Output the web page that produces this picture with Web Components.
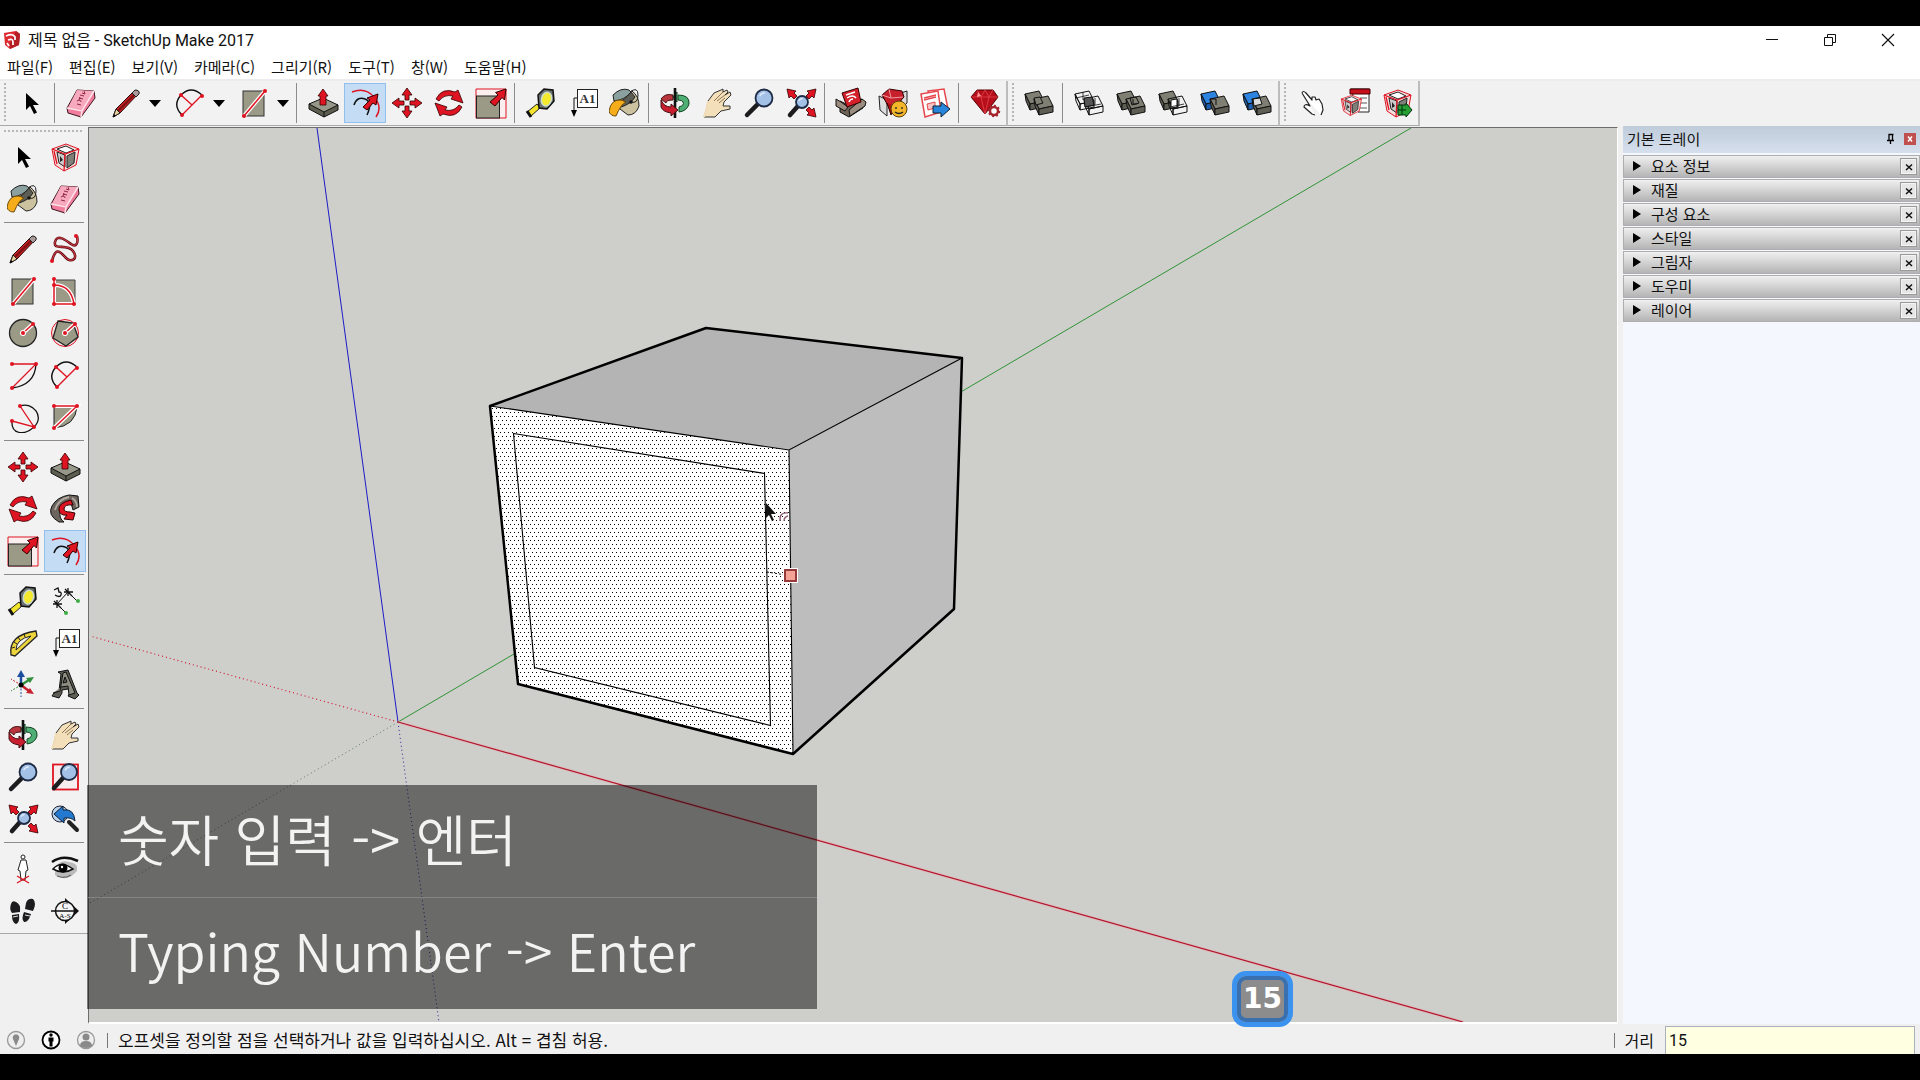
<!DOCTYPE html>
<html lang="ko">
<head>
<meta charset="utf-8">
<title>제목 없음 - SketchUp Make 2017</title>
<style>
html,body{height:100%}
body{margin:0;background:#000;font-family:"Noto Sans CJK KR","Noto Sans",sans-serif;color:#111;overflow:hidden}
</style>
</head>
<body>
<sk-app></sk-app>
<script>
const RED='#df1422', GRAY='#9a9a86';
const arrowNE=(x,y)=>`<path transform="translate(${x} ${y})" d="M0 10L8 3 5.500 0.500 16-3 14.500 8 12 5.500 5 14z" fill="${RED}" stroke="#300" stroke-width="1"/>`;
const lens=(cx,cy,r,hx,hy)=>`<path d="M${cx-r*.7} ${cy+r*.7}L${hx} ${hy}" stroke="#1c1c1e" stroke-width="4.500" stroke-linecap="round"/><circle cx="${cx}" cy="${cy}" r="${r}" fill="#a3c0e6" stroke="#1d2b45" stroke-width="1.800"/><path d="M${cx-r*.5} ${cy-r*.2}a${r*.6} ${r*.6} 0 0 1 ${r*.6}-${r*.4}" stroke="#dceafa" fill="none" stroke-width="1.500"/>`;
const dot=(...p)=>p.map(([x,y])=>`<circle cx="${x}" cy="${y}" r="2" fill="${RED}"/>`).join('');
const slab=(x,y,f,s='#111')=>`<g transform="translate(${x} ${y})" stroke="${s}" stroke-width="1" stroke-linejoin="round"><path d="M0 3L14 0 19 10 5 13z" fill="${f[0]}"/><path d="M0 3L5 13v6L1 10z" fill="${f[1]}"/><path d="M5 13L19 10v6L5 19z" fill="${f[1]}"/></g>`;
const G=['#807f73','#5f5e54'], B=['#2c84e0','#1c5eb0'], N=['none','none'];
const boxRed=`<path d="M3 8L17 3 30 8 27 24 15 30 6 24z" fill="#f4dede" stroke="${RED}"/><path d="M8 11l8 3v12l-6-4z" fill="#ccc" stroke="#222"/><path d="M18 15l8-4-1 11-7 5z" fill="#808078" stroke="#222"/><path d="M8 8l9-3 8 4-8 3z" fill="#fff" stroke="#222"/><path d="M11 15l3 4-3 2z" fill="#222"/><path d="M3 8l13 5 14-5M16 13l-1 17M5 10l3 13" stroke="${RED}" stroke-width="1.300" fill="none"/>`;
const ICONS={
select:`<path d="M11 6v17l4-4 4 8 3-1.500-4-7.500h6z" fill="#000"/>`,
eraser:`<path d="M12 3L29 4 30 11 16 30 3 26 2 21z" fill="#f07d9c" stroke="#3a1520" stroke-linejoin="round"/><path d="M12 3L29 4 17 23 3 21z" fill="#f7a9bd"/><path d="M2 21l15 3 12-20M17 24l-1 6" fill="none" stroke="#fde4ea" stroke-width="1.500"/><path d="M12 17l4 1M12 14q4-2 4 1M14 11l4 1M14 13l1-3M15 8l4 1M17 6l3 1-1-3" stroke="#8e2746" fill="none"/>`,
pencil:`<path d="M3 30l3-8L24 4q4-2 5 2L10 26z" fill="#c01f23" stroke="#2a0a0a"/><path d="M8 24L26 6" stroke="#7b1113" stroke-width="2"/><path d="M3 30l3-8 4 4z" fill="#e8cf9e" stroke="#222"/><path d="M3 30l1-3 2 2z"/><path d="M22 6l4 4 3-3q1-4-4-4z" fill="#a99" stroke="#222"/>`,
arc2:`<path d="M7 8Q17-2 28 8M7 8Q-2 18 8 28" fill="none" stroke="#111" stroke-width="1.400"/><path d="M8 28L28 8M7 8L18 18" stroke="${RED}" stroke-width="1.400"/>${dot([7,8],[28,9],[8,28])}`,
rect:`<rect x="5" y="4" width="21" height="25" fill="${GRAY}" stroke="#333"/><path d="M6 29L27 4" stroke="#fff" stroke-width="4"/><path d="M6 29L27 4" stroke="${RED}" stroke-width="1.500"/>${dot([6,29],[27,4])}`,
push:`<path d="M2 17v5l15 8 14-7v-5z" fill="#5d5d50" stroke="#111"/><path d="M2 17L16 11 31 18 17 25z" fill="#98988a" stroke="#111"/><path d="M17 25v5" stroke="#111"/><path d="M16 2L21 9H19V18H13V9H11z" fill="${RED}" stroke="#300" stroke-width=".8"/>`,
offset:`<path d="M3 5Q16 0 25 10T27 30" fill="none" stroke="${RED}" stroke-width="1.500"/><path d="M5 18Q8 9 16 12T18 28" fill="none" stroke="#111" stroke-width="1.500"/><path d="M14 20L21 13 18 11 29 7 27 18 24 16 18 23z" fill="${RED}" stroke="#300"/>`,
move:[0,90,180,270].map(a=>`<path transform="rotate(${a} 16 16)" d="M16 1L21 8H18V13H14V8H11z" fill="${RED}" stroke="#300" stroke-width=".8"/>`).join(''),
rotate:[0,180].map(a=>`<path transform="rotate(${a} 16 16)" d="M3 12Q9 0 22 5L25 3 30 16 18 12 20 9Q11 7 6 14z" fill="${RED}" stroke="#300" stroke-width=".8"/>`).join(''),
scale:`<path d="M1 2H31V31H1z" fill="#fbeeee" stroke="${RED}"/><rect x="1.500" y="9" width="23" height="22" fill="${GRAY}" stroke="#222"/>${arrowNE(15,5)}`,
tape:`<path d="M2 25l10-8 3 4-9 8z" fill="#f1e42a" stroke="#222"/><path d="M2 24l4 6" stroke="#111" stroke-width="3"/><path d="M13 8L19 2 28 3 29 14 22 22 14 21z" fill="#6b7172" stroke="#111" stroke-width="1.500"/><ellipse cx="21.500" cy="12" rx="5" ry="7" transform="rotate(15 21 12)" fill="#f4e92c" stroke="#cdc" stroke-width="1.500"/>`,
text:`<path d="M12 11H7V25" fill="none" stroke="#111"/><path d="M4 23h6l-3 7z"/><rect x="10.500" y="2.500" width="20" height="18" fill="#fff" stroke="#222"/><text x="20.500" y="16" font-family="Liberation Serif,serif" font-size="13" font-weight="700" text-anchor="middle" fill="#333">A1</text>`,
paint:`<path d="M5 10L23 4Q30 9 30 19 27 28 19 28L11 22 8 14z" fill="#cdc29f" stroke="#222"/><path d="M4 8Q12 0 20 3L22 5Q16 13 5 14z" fill="#8ba19f" stroke="#222"/><path d="M22 5Q15 14 9 15L12 20Q22 17 26 10z" fill="#5c5e56" stroke="#222"/><circle cx="22" cy="15" r="1.800" fill="#111"/><path d="M0 24Q2 12 12 13L17 15Q12 17 7 29 1 29 0 24z" fill="#f6ad1c" stroke="#6b4a08"/><path d="M21 5Q29-1 29 8T22 15" fill="none" stroke="#222"/>`,
orbit:`<path d="M2 12Q6 6 14 8V13Q7 13 7 16z" fill="#b9343d" stroke="#411"/><path d="M19 8Q31 8 30 17 28 24 20 25V20Q26 18 24 15 23 13 19 13z" fill="#4fae74" stroke="#142"/><path d="M18 5v10l-4-5z" fill="#4fae74" stroke="#142"/><path d="M16 1V31" stroke="#111" stroke-width="2.600"/><path d="M2 13V20Q4 25 12 26V29L19 23 12 17V20Q5 20 2 13z" fill="#c81e30" stroke="#411"/>`,
hand:`<path d="M3 30Q6 22 7 14L13 6 20 3 22 2 22 5 26 3 27 5 24 8 29 5 30 8 23 15 22 19 29 19 29 22 20 24 14 30z" fill="#f4dfbb" stroke="#333" stroke-linejoin="round"/><path d="M13 14L22 5M16 14L24 8M18 16l6-5" stroke="#8a7455" fill="none"/><path d="M3 30Q6 22 7 14" stroke="#f4dfbb" stroke-width="2"/>`,
zoom:lens(21,11,8.5,4,28),
extents:`${lens(17,15,6,5,28)}${[[31,2,0],[2,2,-90],[31,30,90]].map(([x,y,a])=>`<path transform="translate(${x} ${y}) rotate(${a})" d="M0 0L-2 9-4 7-7 10-10 7-7 4-9 2z" fill="${RED}" stroke="#300" stroke-width=".8"/>`).join('')}`,
wh:`<path d="M5 14l8 4 14-6 1 9-14 9-9-5z" fill="#6f6357" stroke="#111"/><path d="M1 12l5 3 7 5-3 4-9-5zM27 12l4 3-1 4-15 10-1-6z" fill="#9a8d7f" stroke="#111"/><path d="M7 6L23 1 26 15 12 20z" fill="#d3202b" stroke="#300"/><path d="M11 8l9-3M12 11q6-4 9 0M14 15q1-3 4-3" stroke="#fff" fill="none" stroke-width="1.500"/>`,
ext:`<path d="M2 9l8 4v16l-7-6zM24 6l6-2v12l-6 6z" fill="#ddd" stroke="#222"/><path d="M5 8L12 2 25 4 27 10 14 24z" fill="#c6202d" stroke="#300"/><path d="M5 8l9 3 12-1M12 2l2 9" stroke="#f09aa0" fill="none"/><path d="M10 16l4 12 4-9" fill="#a11" stroke="#300"/><circle cx="22" cy="22" r="8" fill="#f3b62a" stroke="#5b3d08"/><path d="M19 20v2M25 20v2M18 25q4 3 8 0" stroke="#222" fill="none" stroke-width="1.300"/>`,
layout:`<path d="M9 4L25 2 29 22 14 26z" fill="#fff" stroke="#e5484f" stroke-width="1.500"/><path d="M2 7L19 4 22 25 6 30z" fill="#fff" stroke="#e5484f" stroke-width="1.500"/><path d="M5 11L17 8M5 13l12-3" stroke="#e5484f" fill="none" stroke-width="1.500"/><path d="M8 17l8-2v6l-7 2z" fill="#f5c4c6" stroke="#e5484f"/><path d="M14 19H22V15L31 22 22 30V26H14z" fill="#2885dc" stroke="#123"/>`,
gem:`<path d="M2 10L8 3H24L29 10 16 27z" fill="#b60e1a" stroke="#500"/><path d="M2 10H29M8 3l4 7 4-7 4 7 4-7M12 10l4 17 4-17" stroke="#e2454d" stroke-width=".8" fill="none"/><path d="M9 5l3 4-4 1z" fill="#ff9a9a"/><circle cx="25" cy="24" r="4" fill="#fff" stroke="#a6242e" stroke-width="2.500"/><circle cx="25" cy="24" r="5.500" fill="none" stroke="#a6242e" stroke-width="1.500" stroke-dasharray="2 2.200"/>`,
shell:slab(2,4,G)+slab(11,9,G)+`<path d="M11 11l6-1 3 6-7 2z" fill="${G[0]}" stroke="#111"/>`,
inter:slab(2,4,N)+slab(11,9,N)+`<path d="M11 11l8-1 2 8-9 2z" fill="#555" stroke="#111"/><path d="M3 11l13-3M10 5v8M13 20l15-3M22 11v7" stroke="#111" fill="none" stroke-width=".8"/>`,
union:slab(2,4,G)+slab(11,9,G)+`<path d="M15 11l6-1 3 6-7 2zM18 12v5h4" fill="none" stroke="#111"/>`,
sub:slab(2,4,G)+slab(11,9,N)+`<path d="M14 13l6-1v8l-6 1z" fill="#fff" stroke="#111"/><path d="M22 11v8M13 20l14-3" stroke="#111" stroke-width=".8"/>`,
trim:slab(2,4,B)+slab(11,9,G)+`<path d="M11 12h6v6" fill="none" stroke="#111"/>`,
split:slab(2,4,B)+slab(11,9,G)+`<path d="M12 12l7-1 2 6-8 2z" fill="#ddd" stroke="#111"/>`,
point:`<path d="M5 6Q6 3 9 6L15 13 15 10 18 10 19 13 22 12 25 17 26 23 24 28M5 6L13 19Q7 16 7 20L15 27 18 28" fill="#fff" stroke="#222" stroke-width="1.200" stroke-linejoin="round"/>`,
compopt:`<path d="M12 2H30V25H19z" fill="#fff" stroke="#222"/><path d="M11 2H31V7H11z" fill="#c8101c" stroke="#400"/><path d="M21 11h7M21 16h7M21 21h7" stroke="#555"/><g transform="translate(0 6) scale(.75)">${boxRed}</g>`,
compattr:`${boxRed}<path d="M17 18h8v-2l6 7-6 7v-2h-8z" fill="#27a033" stroke="#031"/><path d="M17 23h8M21 18v10" stroke="#031"/>`,
comp:boxRed,
free:`<path d="M3 28C7 12 12 20 17 25S30 26 24 18 4 18 6 9 18 8 22 11 30 12 28 3" fill="none" stroke="#651018" stroke-width="2.600"/><path d="M3 28C7 12 12 20 17 25S30 26 24 18 4 18 6 9 18 8 22 11 30 12 28 3" fill="none" stroke="#e0404a" stroke-width="1"/>${dot([3,28],[27,3])}`,
rrect:`<path d="M5 5H26V29H5z" fill="${GRAY}" stroke="#444"/><path d="M5 4V29H26M5 10Q22 10 25 29" fill="none" stroke="#fff" stroke-width="4"/><path d="M5 4V29H26M5 10Q22 10 25 29" fill="none" stroke="${RED}" stroke-width="1.500"/>${dot([5,4],[5,10],[5,29],[25,29])}`,
circle:`<circle cx="16" cy="16" r="13.500" fill="${GRAY}" stroke="#222" stroke-width="1.300"/><path d="M16 16L26 7" stroke="#fff" stroke-width="4"/><path d="M16 16L26 7" stroke="${RED}" stroke-width="1.500"/><circle cx="16" cy="16" r="3" fill="#fff"/>${dot([16,16],[26,7])}`,
poly:`<circle cx="16" cy="16" r="13.500" fill="#f4e6e4" stroke="${RED}"/><path d="M9 4L24 6 29 20 17 29 4 21z" fill="${GRAY}" stroke="#222" stroke-width="1.300"/><path d="M16 16L26 7" stroke="#fff" stroke-width="4"/><path d="M16 16L26 7" stroke="${RED}" stroke-width="1.500"/><circle cx="16" cy="16" r="3" fill="#fff"/>${dot([16,16],[26,7])}`,
arc:`<path d="M29 5Q28 26 5 29" fill="none" stroke="#111" stroke-width="1.300"/><path d="M5 5H29L5 29" fill="none" stroke="${RED}" stroke-width="1.300"/>${dot([5,5],[29,5],[5,29])}`,
arc3:`<path d="M13 5C26 0 38 16 27 26S4 32 5 20" fill="none" stroke="#111" stroke-width="1.300"/><path d="M13 5L27 26 5 20" fill="none" stroke="${RED}" stroke-width="1.300"/>${dot([13,5],[27,26],[5,20])}`,
pie:`<path d="M5 5H28Q27 25 5 27z" fill="${GRAY}" stroke="#222"/><path d="M5 5H28L5 27" fill="none" stroke="#fff" stroke-width="4"/><path d="M5 5H28L5 27" fill="none" stroke="${RED}" stroke-width="1.400"/>${dot([5,5],[28,5],[5,27])}`,
follow:`<path d="M10 29Q-2 22 3 13T20 2L29 3 30 14 24 17 22 10Q12 10 11 18T15 29z" fill="#6b655e" stroke="#111"/><path d="M6 17Q9 6 20 4M23 5q5 3 5 9" stroke="#b3aca3" stroke-width="1.800" fill="none"/><path d="M22 7Q9 10 10 17 11 23 18 22L15 26 24 27 26 20 21 19Q15 19 15 16 15 11 24 12z" fill="${RED}" stroke="#300"/>`,
dim:`<path d="M8 19L19 7" stroke="#111"/><path d="M4 19h9M8 15v8M5 16l7 7M15 7h9M19 3v8M16 4l7 7" stroke="#111" stroke-width="1.300"/><path d="M9 20l8 8M20 8l8 8" stroke="#111"/><circle cx="17" cy="28" r="2" fill="#3fae45"/><circle cx="29" cy="16" r="2" fill="#3fae45"/><path d="M5 5l4-2 1 4q3 0 2 3t-6 0" fill="none" stroke="#111" stroke-width="1.300"/>`,
prot:`<path d="M4 28Q1 8 29 4L30 9 8 29z" fill="#ecd43c" stroke="#222" stroke-width="1.300"/><path d="M9 23Q9 12 24 9z" fill="#f3f3f3" stroke="#222"/><path d="M5 21l3-1M7 15l3 2M11 10l2 3M17 7l1 3" stroke="#222"/>`,
axes:`<path d="M14 16V6" stroke="#1d4e9e" stroke-width="2.500"/><path d="M14 1L18 8H10z" fill="#1d4e9e"/><path d="M14 16L22 11" stroke="#2f8f3a" stroke-width="2.500"/><path d="M27 8l-8 1 4 5z" fill="#2f8f3a"/><path d="M14 16L22 22" stroke="#c8202c" stroke-width="2.500"/><path d="M27 25l-8-1 4-5z" fill="#c8202c"/><path d="M14 16V28" stroke="#1d4e9e" stroke-dasharray="2 1.500"/><path d="M14 16L4 22" stroke="#2f8f3a" stroke-dasharray="2 1.500"/><path d="M14 16L4 10" stroke="#c8202c" stroke-dasharray="2 1.500"/><circle cx="14" cy="16" r="2.500"/>`,
text3d:`<path d="M5 24L10 22 12 5 9 3 19 1 28 24 30 26 26 30 19 27 21 24 19 20 13 21 13 24 10 29 3 27z" fill="#5e5e56" stroke="#111"/><path d="M4 24L11 22 14 4 17 3 26 24 20 26 19 17 12 18M14 14l4-1-2-5z" fill="#8d8d82" stroke="#111"/>`,
zoomwin:`<rect x="4" y="3.500" width="25" height="25" fill="#f6eeee" stroke="${RED}" stroke-width="1.800"/>${lens(20,11,8,5,27)}`,
prev:`<path d="M20 19l8 8" stroke="#222" stroke-width="4" stroke-linecap="round"/><circle cx="11" cy="11" r="8" fill="#b9d0ea" stroke="#223"/><path d="M5 11L14 3V7Q25 5 26 18Q22 14 15 15V20z" fill="#2378cf" stroke="#123"/>`,
camera:`<circle cx="16" cy="4" r="2" fill="#fff" stroke="#222"/><path d="M14 7h5l2 10-2 1-1 9h-4l-1-9-2-1z" fill="#fff" stroke="#222"/><path d="M10 30l12-7M22 30l-12-7" stroke="${RED}" stroke-width="1.300"/>`,
eye:`<path d="M6 22Q18 30 28 18Q30 10 20 9Q10 6 6 16z" fill="#bbb"/><path d="M3 9Q14 1 29 8" fill="none" stroke="#111" stroke-width="2.500"/><path d="M4 16Q12 7 24 16Q14 22 4 16z" fill="#fff" stroke="#111" stroke-width="1.500"/><circle cx="14" cy="15" r="4.500"/><circle cx="13" cy="14" r="1.200" fill="#fff"/><path d="M8 23q8 3 14-1" fill="none" stroke="#666" stroke-width="1.300"/>`,
walk:`<path d="M4 9Q5 5 9 7 14 9 13 17L5 18Q2 14 4 9zM5 20l7-1Q13 28 9 29 5 28 5 20zM19 8Q21 3 26 4 30 8 26 16L18 14zM17 17l7 2Q21 28 17 27 14 24 17 17z" fill="#1c1c1e"/><path d="M6 22l5-1M18 20l5 1" stroke="#ddd"/>`,
section:`<path d="M16 3L30 16 16 29z" fill="#111"/><circle cx="16" cy="16" r="9.500" fill="#f4f4f4" stroke="#111" stroke-width="1.500"/><path d="M2 16H28" stroke="#111" stroke-width="1.500"/><text x="16" y="14" font-family="Liberation Serif,serif" font-size="9" text-anchor="middle">C</text><text x="16" y="23" font-family="Liberation Serif,serif" font-size="7" text-anchor="middle">A-S</text>`
};

class Base extends HTMLElement{
  connectedCallback(){
    if(this.shadowRoot) return;
    this.attachShadow({mode:'open'}).innerHTML=`<style>*{box-sizing:border-box}button{font:inherit;color:inherit;background:none;border:0;padding:0;margin:0}${this.css()}</style>${this.html()}`;
  }
}
const def=(n,css,html)=>customElements.define(n,class extends Base{css(){return css}html(){return typeof html==='function'?html(this):html}});

def('sk-tool',`:host{display:block;width:42px;height:var(--tool-h,42px)}
:host([menu]){width:64px}
.w{display:flex;height:100%}
.m{display:flex;align-items:center;justify-content:center;width:100%;height:100%}
:host([menu]) .m{width:42px;margin-left:3px}
.d{width:16px;display:flex;align-items:center;justify-content:center}
.d i{border:6px solid transparent;border-top:7px solid #000;border-bottom:0}
:host([active]) .m{background:#c5dcf5;border:1px solid #92c0ee}
svg{display:block;width:32px;height:32px;flex:none}`,
h=>`<div class="w"><button class="m" aria-label="${h.getAttribute('icon')}"><svg viewBox="0 0 32 32" fill="#000">${ICONS[h.getAttribute('icon')]}</svg></button>${h.hasAttribute('menu')?'<button class="d" aria-label="more"><i></i></button>':''}</div>`);

def('sk-toolbar',`:host{display:flex;align-items:center;height:45px;border-right:2px solid #bdbdbd;border-bottom:1px solid #a9a9a9;background:#f3f2f3;--tool-h:40px}
.grip{width:10px;height:40px;flex:none;background:repeating-linear-gradient(#b5b5b5 0 2px,transparent 2px 4px) 4px 0/2px 100% no-repeat}
:host([wide]) .grip{width:12px}`,`<div class="grip"></div><slot></slot>`);
def('sk-sep',`:host{display:block;width:8px;height:40px;background:linear-gradient(#8c8c8c,#8c8c8c) 2px 0/1px 100% no-repeat}
:host([h]){width:80px;height:8px;margin-left:2px;background:linear-gradient(#8c8c8c,#8c8c8c) 0 2px/100% 1px no-repeat}`,'');

const tools=s=>s.split(' ').map(t=>t==='|'?'<sk-sep></sk-sep>':`<sk-tool icon="${t.replace(/[*+]/,'')}"${t.endsWith('*')?' active':''}${t.endsWith('+')?' menu':''}></sk-tool>`).join('');
def('sk-toolrow',`:host{display:flex;height:47px;background:#f2f1f2;border-top:2px solid #ececee}`,
`<sk-toolbar>${tools('select | eraser pencil+ arc2+ rect+ | push offset* move rotate scale | tape text paint | orbit hand zoom extents | wh ext layout | gem')}</sk-toolbar><sk-toolbar>${tools('shell | inter union sub trim split')}</sk-toolbar><sk-toolbar wide>${tools('point compopt compattr')}</sk-toolbar>`);

def('sk-palette',`:host{display:block;width:88px;background:#f0f0f0;flex:none}
.p{padding:10px 2px 1px;background:#f3f2f3;border-bottom:1px solid #a8a8a8}
.p::before{content:"";display:block;height:2px;margin:-6px 2px 4px;background:repeating-linear-gradient(90deg,#b8b8b8 0 2px,transparent 2px 4px)}
.g{display:grid;grid-template-columns:42px 42px}`,
`<div class="p">${['select comp paint eraser','pencil free rect rrect circle poly arc arc2 arc3 pie','move push rotate follow scale offset*','tape dim prot text axes text3d','orbit hand zoom zoomwin extents prev','camera eye walk section'].map(g=>`<div class="g">${tools(g)}</div>`).join('<sk-sep h></sk-sep>')}</div>`);

def('sk-titlebar',`:host{display:flex;align-items:center;height:28px;background:#fff;font-size:16px;padding-left:3px}
.logo{width:18px;height:20px;margin-right:7px}span{flex:1;line-height:24px;padding-top:2px;font-family:Roboto,"Noto Sans CJK KR",sans-serif}
button{width:58px;height:28px;display:flex;align-items:center;justify-content:center}.c{display:flex;margin-right:3px}`,
`<svg class="logo" viewBox="0 0 18 20"><path d="M1 3L13 1 17 4 16 15 7 19 2 15z" fill="#dc2a2f"/><path d="M13 1l4 3-1 11-9 4 0-6z" fill="#b51f26"/><path d="M3 6q7-3 9 1v3M5 10q5-2 5 2v3M4 13l2 3" stroke="#fff" stroke-width="1.700" fill="none"/></svg><span>제목 없음 - SketchUp Make 2017</span>
<div class="c"><button aria-label="min"><svg width="14" height="14"><path d="M1 6.500H13" stroke="#111"/></svg></button><button aria-label="max"><svg width="14" height="14" fill="none" stroke="#111"><path d="M1.500 4.500h8v8h-8zM4.500 4V1.500h8v8H10"/></svg></button><button aria-label="close"><svg width="14" height="14"><path d="M1 1L13 13M13 1L1 13" stroke="#111" stroke-width="1.200"/></svg></button></div>`);
def('sk-menubar',`:host{display:flex;gap:16px;height:25px;align-items:center;background:#fff;padding-left:7px;font-size:15px}button{line-height:24px;white-space:nowrap}`,
['파일(F)','편집(E)','보기(V)','카메라(C)','그리기(R)','도구(T)','창(W)','도움말(H)'].map(t=>`<button>${t}</button>`).join(''));

def('sk-viewport',`:host{display:block;flex:1;min-width:0;position:relative;background:#cececa;border:1px solid #6d6d6d;border-right:1px solid #fff;border-bottom:2px solid #fff;margin-top:1px}
svg{display:block;width:100%;height:100%;position:absolute;inset:0}
sk-caption{position:absolute;left:-2px;top:657px}
sk-key{position:absolute;left:1143px;top:843px;z-index:2}`,
`<svg><defs><pattern id="dots" width="4" height="8" patternUnits="userSpaceOnUse"><rect width="4" height="8" fill="#fff"/><path d="M0 0h1v1H0zM2 4h1v1H2z" fill="#000" shape-rendering="crispEdges"/></pattern></defs>
<g transform="translate(-89 -128)" fill="none">
<path d="M398 722L317 128" stroke="#1c1cc8"/><path d="M398 722L439 1022" stroke="#2222a4" stroke-dasharray="1 3"/>
<path d="M398 722L1411 128" stroke="#2f9436"/><path d="M398 722L90 903" stroke="#5d7d5d" stroke-dasharray="1 3"/>
<path d="M398 722L1463 1022" stroke="#f0a8ae" stroke-opacity=".45" stroke-width="3"/><path d="M398 722L1463 1022" stroke="#b0152c" stroke-width="1.200"/><path d="M398 722L90 636" stroke="#d01c34" stroke-width="1.200" stroke-dasharray="1 3"/>
<path d="M490 406L706 328 962 358 789 450z" fill="#b4b4b4"/><path d="M962 358L954 609 793 754 789 450z" fill="#bdbdbd"/><path d="M490 406L789 450 793 754 518 684z" fill="url(#dots)"/>
<path d="M490 406L789 450 962 358M789 450L793 754M513.500 433.500L764.500 473.500 770.500 725.500 534.500 667.500z" stroke="#000" stroke-width="1.100"/>
<path d="M490 406L706 328 962 358 954 609 793 754 518 684z" stroke="#000" stroke-width="2.500" stroke-linejoin="round"/>
<path d="M767 572L786 575" stroke="#000" stroke-dasharray="2 2"/>
<rect x="783" y="568" width="15" height="15" fill="#fff"/><rect x="785" y="570" width="11" height="11" fill="#f5a397" stroke="#96393a" stroke-width="2"/>
<path d="M766 503v15l3-3 3 6 2-1-3-6h5z" fill="#111"/><path d="M780 521q-1-9 8-8M784 521q0-4 4-5" stroke="#8b5a75" stroke-width="1.300"/>
</g></svg><sk-caption></sk-caption><sk-key></sk-key>`);
def('sk-caption',`:host{display:block;width:730px;background:rgba(6,6,6,.5);color:#f3f3f3;font-weight:350;font-size:55px}
div{height:112px;line-height:104px;padding-left:31px;white-space:nowrap}div+div{border-top:1px solid #848484;font-size:52px}`,`<div>숫자 입력 -&gt; 엔터</div><div>Typing Number -&gt; Enter</div>`);
def('sk-key',`:host{display:flex;align-items:center;justify-content:center;width:61px;height:56px;border-radius:14px;background:#8c8c8c;border:5px solid #3b92ef;box-shadow:inset 0 0 0 4px #3b70ae;color:#fff;font:700 28px/40px "DejaVu Sans",sans-serif}`,`<span>15</span>`);

def('sk-tray',`:host{display:block;width:297px;flex:none;margin-left:5px;background:#f4f7fe;font-size:15px}
header{display:flex;align-items:center;height:27px;padding:0 4px 1px;background:linear-gradient(#bfccda,#d6dfee);margin-bottom:2px}
header span{flex:1;line-height:24px}header button{width:12px;height:12px;display:flex}header .x{background:#c0504f;margin-left:7px}
.l{display:grid;gap:1px}`,
`<header><span>기본 트레이</span><button aria-label="pin"><svg width="12" height="12"><path d="M3.500 1.500h5M4 1v6M7.500 1v6M2 7.500h7M5.500 7v4" stroke="#000" stroke-width="1.300" fill="none"/></svg></button><button class="x" aria-label="close"><svg width="12" height="12"><path d="M4 3.500l4 5M8 3.500l-4 5" stroke="#fff" stroke-width="1.500"/></svg></button></header><div class="l">${['요소 정보','재질','구성 요소','스타일','그림자','도우미','레이어'].map(t=>`<sk-panel>${t}</sk-panel>`).join('')}</div>`);
def('sk-panel',`:host{display:flex;align-items:center;height:23px;border:1px solid #aeaeae;background:linear-gradient(#f0f0f0,#b4b4b4);padding-right:2px}
.t{flex:1;display:flex;align-items:center;text-align:left;line-height:20px;padding:0 0 2px 9px}
i{border:5px solid transparent;border-left:8px solid #000;border-right:0;margin-right:10px}
.x{width:17px;height:17px;border:1px solid #999;outline:1px solid #f4f4f4;outline-offset:-2px;background:#e6e6e6;display:flex;align-items:center;justify-content:center}`,
`<button class="t"><i></i><slot></slot></button><button class="x" aria-label="close"><svg width="8" height="8"><path d="M1 1.500L7 7M7 1.500L1 7" stroke="#111" stroke-width="1.500"/></svg></button>`);

def('sk-status',`:host{display:flex;align-items:center;height:30px;background:#f1f0f1;font-size:17px;overflow:hidden;box-sizing:border-box;padding-top:2px}
.i{display:flex;gap:15px;padding-left:6px}svg{display:block}
b{width:1px;height:15px;background:#777;margin:0 10px 0 11px}span{flex:1;line-height:24px}
label{font-size:16px;margin-right:11px}
input{width:250px;height:28px;margin:0 5px 0 0;border:1px solid #a9b1bd;border-bottom:0;background:#ffffe1;font:16px/24px Roboto,sans-serif;padding:0 3px;color:#111}`,
`<div class="i"><svg width="20" height="20"><circle cx="10" cy="10" r="8.500" fill="#eee" stroke="#999" stroke-width="1.300"/><path d="M10 16L7 9a3.300 3.300 0 1 1 6 0z" fill="#8a8a8a"/></svg><svg width="20" height="20"><circle cx="10" cy="10" r="8.500" fill="#fff" stroke="#000" stroke-width="1.800"/><circle cx="10" cy="5" r="1.700"/><path d="M7.500 7.500h5v4h-1v5h-3v-5h-1z"/></svg><svg width="20" height="20"><circle cx="10" cy="10" r="8.500" fill="#eee" stroke="#999" stroke-width="1.300"/><circle cx="10" cy="7" r="3.500" fill="#8a8a8a"/><path d="M4 16q0-5 6-5t6 5q-6 4-12 0z" fill="#8a8a8a"/></svg></div><b></b><span>오프셋을 정의할 점을 선택하거나 값을 입력하십시오. Alt = 겹침 허용.</span><b></b><label for="v">거리</label><input id="v" value="15">`);

def('sk-app',`:host{display:flex;flex-direction:column;height:100vh;box-sizing:border-box;padding:26px 0;background:#000}
.w{flex:1;display:flex;min-height:0;background:#f1f0f1}`,
`<sk-titlebar></sk-titlebar><sk-menubar></sk-menubar><sk-toolrow></sk-toolrow><div class="w"><sk-palette></sk-palette><sk-viewport></sk-viewport><sk-tray></sk-tray></div><sk-status></sk-status>`);
</script>
</body>
</html>
